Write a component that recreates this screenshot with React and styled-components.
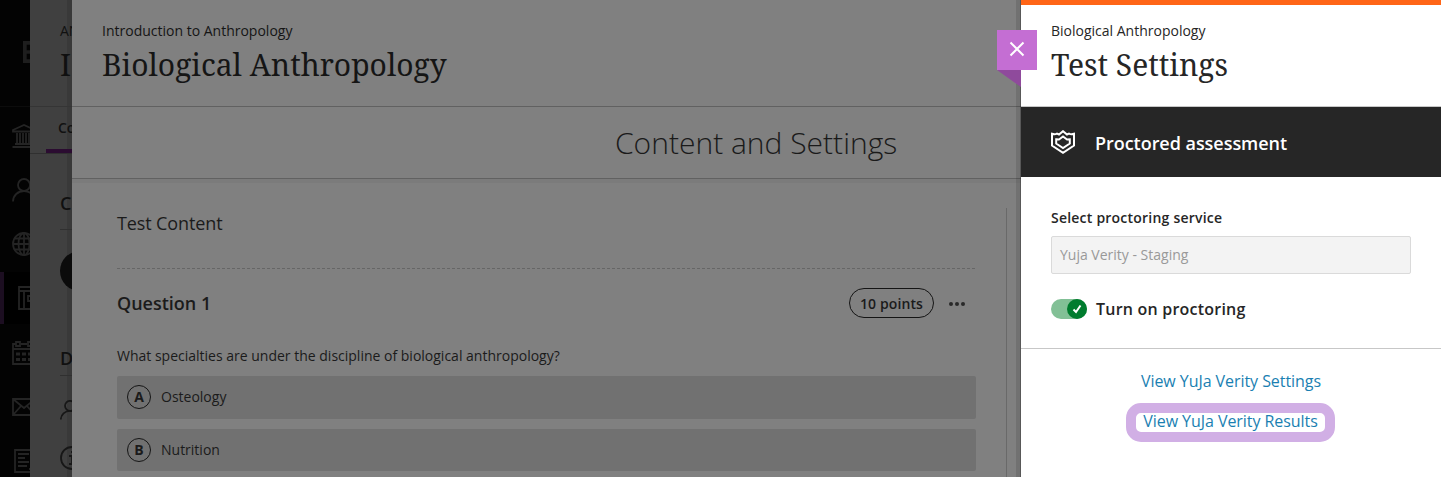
import styled, { createGlobalStyle } from "styled-components";

const SANS = `"Open Sans", "Noto Sans", sans-serif`;
const SERIF = `"Noto Serif", "Droid Serif", "DejaVu Serif Condensed", "DejaVu Serif", serif`;

const GlobalStyle = createGlobalStyle`
  * {
    box-sizing: border-box;
  }

  body {
    margin: 0;
    overflow: hidden;
    font-family: ${SANS};
    font-size: 14px;
    color: #262626;
  }
`;

const Layout = styled.div`
  display: flex;
  width: 1441px;
  height: 477px;
  overflow: hidden;
  background: #808080;
`;

const Sidebar = styled.nav`
  flex: none;
  width: 30px;
  height: 477px;
  overflow: hidden;
  background: #030303;
`;

const SidebarLogo = styled.div`
  height: 107px;
  padding: 41px 0 0 23px;
  border-bottom: 1px solid #0c0c0c;
`;

const SidebarItems = styled.div`
  padding-top: 2px;
`;

const SidebarItem = styled.div`
  display: flex;
  align-items: center;
  height: ${({ $active }) => ($active ? 52 : 54)}px;
  margin: ${({ $active }) => ($active ? "1px 0 2px" : 0)};
  padding-left: ${({ $active }) => ($active ? 14 : 12)}px;
  background: ${({ $active }) => ($active ? "#000" : "transparent")};
  border-left: ${({ $active }) => ($active ? "4px solid #1c0e21" : "none")};
`;

const Icon = styled.svg`
  flex: none;
  display: block;
  width: ${({ $size }) => $size || 24}px;
  height: ${({ $size }) => $size || 24}px;
  fill: none;
  stroke: ${({ $color }) => $color || "#242424"};
  stroke-width: ${({ $stroke }) => $stroke || 1.8};
`;

const Course = styled.section`
  flex: none;
  width: 42px;
  height: 477px;
  overflow: hidden;
  white-space: nowrap;
  background: linear-gradient(to right, #404040 37px, #393939 37px);
`;

const CourseHeader = styled.div`
  height: 107px;
  padding: 20px 0 0 30px;
  border-bottom: 1px solid #353535;
  color: #101010;
`;

const CourseTab = styled.div`
  height: 47px;
  padding: 11px 0 0 28px;
  border-bottom: 1px solid #303030;
  font-weight: 600;
  line-height: 20px;
  color: #111;
`;

const TabMarker = styled.div`
  height: 4px;
  margin: 11px 0 0 -12px;
  background: #2b0c31;
`;

const CourseHeading = styled.div`
  height: ${({ $height }) => $height}px;
  margin-left: 30px;
  padding-top: ${({ $top }) => $top}px;
  border-bottom: 1px solid #303030;
  font-size: 18px;
  font-weight: 600;
  line-height: 24px;
  color: #101010;
`;

const Avatar = styled.div`
  width: 40px;
  height: 40px;
  margin: 21px 0 0 30px;
  border-radius: 50%;
  background: #0b0b0b;
`;

const CourseIcons = styled.div`
  display: flex;
  flex-direction: column;
  gap: 26px;
  padding: 24px 0 0 30px;
`;

const Main = styled.main`
  flex: none;
  display: flex;
  width: 949px;
  height: 477px;
  background: #808080;
`;

const MainColumn = styled.div`
  flex: 1;
`;

const PanelShadow = styled.div`
  width: 5px;
  margin-left: -5px;
  background: rgba(0, 0, 0, 0.115);
  border-right: 1px solid rgba(0, 0, 0, 0.22);
`;

const PanelHeader = styled.header`
  height: ${({ $height }) => $height || 107}px;
  padding: ${({ $top }) => ($top === undefined ? 20 : $top)}px 30px 0;
  border-bottom: 1px solid ${({ $line }) => $line};
  color: ${({ $color }) => $color};
`;

const Crumb = styled.div`
  font-size: 14px;
  line-height: 22px;
`;

const Title = styled.h1`
  margin: 0;
  padding-top: 1px;
  font-family: ${SERIF};
  font-size: 30px;
  font-weight: 400;
  line-height: 44px;
  white-space: nowrap;
`;

const Band = styled.div`
  height: 72px;
  padding: 13px 0 0 543px;
  border-bottom: 1px solid #616161;
  font-size: 30px;
  font-weight: 300;
  line-height: 46px;
  color: #1a1a1a;
`;

const Body = styled.div`
  display: flex;
  justify-content: space-between;
  height: 298px;
  padding: 29px 14px 0 45px;
  background: linear-gradient(#7b7b7b 4px, #808080 4px);
`;

const Content = styled.div`
  width: 859px;
  color: #1b1b1b;
`;

const Divider = styled.div`
  width: 1px;
  background: #696969;
`;

const ContentTitle = styled.h2`
  height: 61px;
  margin: 0;
  padding-top: 3px;
  background: repeating-linear-gradient(to right, #666 0 3px, transparent 3px 5px) bottom / 100% 1px
    no-repeat;
  font-size: 18px;
  font-weight: 400;
  letter-spacing: -0.12px;
  line-height: 24px;
`;

const QuestionRow = styled.div`
  display: flex;
  align-items: center;
  height: 30px;
  margin-top: 19px;
`;

const QuestionTitle = styled.h3`
  flex: 1;
  margin: 0;
  font-size: 18px;
  font-weight: 600;
`;

const Points = styled.div`
  width: 85px;
  height: 30px;
  border: 1px solid #151515;
  border-radius: 15px;
  font-weight: 600;
  letter-spacing: 0.12px;
  line-height: 29px;
  text-align: center;
`;

const Dots = styled.div`
  display: flex;
  gap: 2px;
  margin: 1px 11px 0 15px;
`;

const Dot = styled.span`
  width: 4px;
  height: 4px;
  border-radius: 50%;
  background: #292929;
`;

const QuestionText = styled.p`
  margin: 27px 0 9px;
  line-height: 22px;
`;

const Answer = styled.div`
  display: flex;
  gap: 10px;
  height: ${({ $height }) => $height}px;
  margin-bottom: 10px;
  padding: 9px 0 0 10px;
  border-radius: 2px;
  background: #717171;
  line-height: 23px;
`;

const Letter = styled.span`
  width: 24px;
  height: 24px;
  border: 1px solid #151515;
  border-radius: 50%;
  font-weight: 700;
  line-height: 22px;
  text-align: center;
`;

const Settings = styled.aside`
  position: relative;
  flex: none;
  width: 420px;
  height: 477px;
  border-top: 5px solid #ff6517;
  background: #fff;
`;

// The ribbon hangs over the left edge of the panel
const CloseButton = styled.button`
  position: absolute;
  top: 25px;
  left: -24px;
  display: flex;
  align-items: center;
  justify-content: center;
  width: 40px;
  height: 40px;
  padding: 0 0 2px;
  border: 0;
  background: #c46ed3;

  &::after {
    content: "";
    position: absolute;
    top: 40px;
    left: 0;
    width: 24px;
    height: 17px;
    background: #8f4a9c;
    clip-path: polygon(0 0, 100% 0, 100% 100%);
  }
`;

const Proctored = styled.div`
  display: flex;
  align-items: center;
  gap: 20px;
  height: 70px;
  padding: 0 30px;
  background: #262626;
  font-size: 18px;
  font-weight: 600;
  color: #fff;
`;

const ProctoredText = styled.span`
  padding-top: 2px;
  letter-spacing: -0.04px;
`;

const Form = styled.div`
  height: 172px;
  padding: 30px 30px 0;
  border-bottom: 1px solid #c7c7c7;
`;

const Label = styled.div`
  font-weight: 600;
  letter-spacing: 0.22px;
  line-height: 22px;
`;

const Field = styled.div`
  height: 38px;
  margin-top: 7px;
  padding-left: 8px;
  border: 1px solid #dadada;
  border-radius: 2px;
  background: #f3f3f3;
  line-height: 36px;
  color: #999;
`;

const SwitchRow = styled.div`
  display: flex;
  align-items: center;
  gap: 9px;
  height: 20px;
  margin-top: 25px;
  font-size: 16px;
  font-weight: 600;
  letter-spacing: 0.22px;
`;

const Switch = styled.div`
  display: flex;
  justify-content: flex-end;
  width: 36px;
  height: 20px;
  border-radius: 10px;
  background: #82c096;
`;

const Knob = styled.div`
  display: flex;
  align-items: center;
  justify-content: center;
  width: 20px;
  height: 20px;
  border-radius: 50%;
  background: #007c2e;
`;

const Links = styled.div`
  display: flex;
  flex-direction: column;
  align-items: center;
  padding-top: 21px;
`;

const Link = styled.a`
  font-size: 16px;
  letter-spacing: -0.06px;
  line-height: 22px;
  color: #1a7fb2;
`;

const Highlight = styled.div`
  display: flex;
  justify-content: center;
  width: 209px;
  height: 39px;
  margin: 11px 1px 0 0;
  border: 10px solid #d1afe5;
  border-radius: 15px;
  background: #fff;

  ${Link} {
    line-height: 17px;
  }
`;

const NAV_ICONS = [
  {
    id: "institution",
    draw: (
      <>
        <path d="M1 6 12 1l11 5v1.500H1z" />
        <path d="M5 9v10M8 9v10M11 9v10M14 9v10M17 9v10M20 9v10M3 20h18M.5 23h23" />
      </>
    ),
  },
  {
    id: "profile",
    draw: (
      <>
        <circle cx="12" cy="7" r="6" />
        <path d="M1 23.500c0-6 5-10.500 11-10.500s11 4.500 11 10.500" />
      </>
    ),
  },
  {
    id: "activity",
    draw: (
      <>
        <circle cx="12" cy="12" r="11" />
        <ellipse cx="12" cy="12" rx="5.500" ry="11" />
        <path d="M12 1v22M1 12h22M3 6.500h18M3 17.500h18" />
      </>
    ),
  },
  {
    id: "courses",
    active: true,
    draw: <path d="M1 1h22v22H1zM1 5h22M6 5v18M23 10H10v5h13" />,
  },
  {
    id: "calendar",
    draw: (
      <>
        <path d="M4 3H1v20h22V3h-3M9 3h6" />
        <path d="M4 1h4v4H4zM16 1h4v4h-4zM1 8h22" />
        <path d="M4 13h4M10 13h4M16 13h4M4 18.500h4M10 18.500h4M16 18.500h4" strokeWidth="3" />
      </>
    ),
  },
  {
    id: "messages",
    draw: <path d="M1 4h22v16H1zM1 4l11 9 11-9M1 20l8-9M23 20l-8-9" />,
  },
  {
    id: "grades",
    draw: <path d="M3 1h20v22H3zM6 5h11M6 9h7M6 13h11M6 17h9M17 20h6" />,
  },
];

const ANSWERS = [
  { letter: "A", text: "Osteology", height: 43 },
  { letter: "B", text: "Nutrition", height: 42 },
];

const CourseNavigation = () => (
  <Sidebar>
    <SidebarLogo>
      <Icon viewBox="0 0 24 24" $size={22} $color="#1e1e1e">
        <path d="M16 2H2v20h14M2 12h14" strokeWidth="4" />
      </Icon>
    </SidebarLogo>
    <SidebarItems>
      {NAV_ICONS.map(({ id, active, draw }) => (
        <SidebarItem key={id} $active={active}>
          <Icon viewBox="0 0 24 24">{draw}</Icon>
        </SidebarItem>
      ))}
    </SidebarItems>
  </Sidebar>
);

const CoursePanel = () => (
  <Course>
    <CourseHeader>
      <Crumb>AN</Crumb>
      <Title>I</Title>
    </CourseHeader>
    <CourseTab>
      Co
      <TabMarker />
    </CourseTab>
    <CourseHeading $height={76} $top={37}>
      C
    </CourseHeading>
    <Avatar />
    <CourseHeading $height={85} $top={55}>
      D
    </CourseHeading>
    <CourseIcons>
      <Icon viewBox="0 0 24 24" $size={20} $color="#171717" $stroke={2.1}>
        <circle cx="12" cy="7" r="6" />
        <path d="M1 23.500c0-6 5-10.500 11-10.500s11 4.500 11 10.500" />
      </Icon>
      <Icon viewBox="0 0 24 24" $color="#171717">
        <circle cx="12" cy="12" r="11" />
        <path d="M9 10h3v8M9 18h6M11 6h3" />
      </Icon>
    </CourseIcons>
  </Course>
);

const TestPanel = () => (
  <Main>
    <MainColumn>
      <PanelHeader $line="#616161" $color="#151515">
        <Crumb>Introduction to Anthropology</Crumb>
        <Title>Biological Anthropology</Title>
      </PanelHeader>
      <Band>Content and Settings</Band>
      <Body>
        <Content>
          <ContentTitle>Test Content</ContentTitle>
          <QuestionRow>
            <QuestionTitle>Question 1</QuestionTitle>
            <Points>10 points</Points>
            <Dots>
              <Dot />
              <Dot />
              <Dot />
            </Dots>
          </QuestionRow>
          <QuestionText>
            What specialties are under the discipline of biological anthropology?
          </QuestionText>
          {ANSWERS.map(({ letter, text, height }) => (
            <Answer key={letter} $height={height}>
              <Letter>{letter}</Letter>
              {text}
            </Answer>
          ))}
        </Content>
        <Divider />
      </Body>
    </MainColumn>
    <PanelShadow />
  </Main>
);

const SettingsPanel = () => (
  <Settings>
    <CloseButton aria-label="Close">
      <Icon viewBox="0 0 16 16" $size={16} $color="#fff" $stroke={2}>
        <path d="M1.500 1.500 14.500 14.500M14.500 1.500 1.500 14.500" />
      </Icon>
    </CloseButton>
    <PanelHeader $height={102} $top={15} $line="#c7c7c7" $color="#262626">
      <Crumb>Biological Anthropology</Crumb>
      <Title>Test Settings</Title>
    </PanelHeader>
    <Proctored>
      <Icon viewBox="0 0 24 24" $color="#fff" $stroke={2}>
        <path d="M1 3.800c2 .7 3.500.6 5-.2L8 4.500 12 1.200l4 3.300 2-.9c1.500.8 3 .9 5 .2V15.500L12 22.800 1 15.500z" />
        <path d="M5.200 9.300 8 9.500l4-3 4 3 2.800-.2v4.200L12 18l-6.800-4.500z" />
      </Icon>
      <ProctoredText>Proctored assessment</ProctoredText>
    </Proctored>
    <Form>
      <Label>Select proctoring service</Label>
      <Field>Yuja Verity - Staging</Field>
      <SwitchRow>
        <Switch>
          <Knob>
            <Icon viewBox="0 0 10 10" $size={10} $color="#fff">
              <path d="M1.500 5.500 4 8 8.500 1.500" strokeWidth="2" />
            </Icon>
          </Knob>
        </Switch>
        Turn on proctoring
      </SwitchRow>
    </Form>
    <Links>
      <Link>View YuJa Verity Settings</Link>
      <Highlight>
        <Link>View YuJa Verity Results</Link>
      </Highlight>
    </Links>
  </Settings>
);

const App = () => (
  <>
    <GlobalStyle />
    <Layout>
      <CourseNavigation />
      <CoursePanel />
      <TestPanel />
      <SettingsPanel />
    </Layout>
  </>
);

export default App;
